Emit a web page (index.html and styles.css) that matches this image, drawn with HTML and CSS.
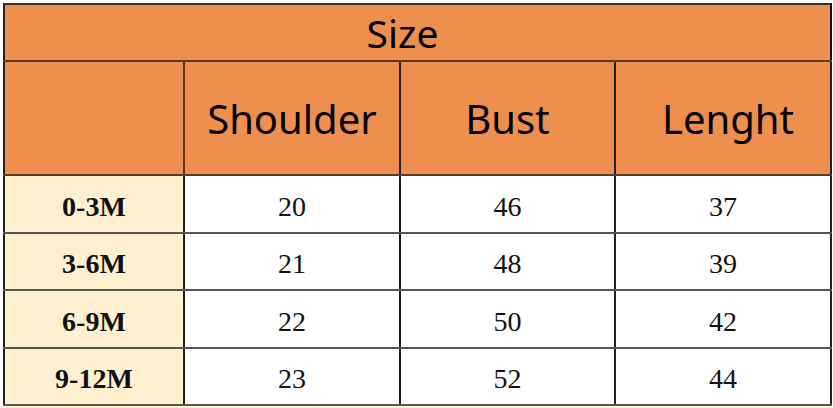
FILE: index.html
```html
<!DOCTYPE html>
<html>
<head>
<meta charset="utf-8">
<link rel="stylesheet" href="styles.css">
</head>
<body>
<div class="page">
  <table class="size-table">
    <colgroup>
      <col class="c1"><col class="c2"><col class="c3"><col class="c4">
    </colgroup>
    <tr class="title-row"><th colspan="4" class="title">Size</th></tr>
    <tr class="head-row">
      <th class="corner"></th>
      <th class="head">Shoulder</th>
      <th class="head">Bust</th>
      <th class="head head-last">Lenght</th>
    </tr>
    <tr class="data-row"><td class="label">0-3M</td><td class="val">20</td><td class="val">46</td><td class="val">37</td></tr>
    <tr class="data-row short"><td class="label">3-6M</td><td class="val">21</td><td class="val">48</td><td class="val">39</td></tr>
    <tr class="data-row"><td class="label">6-9M</td><td class="val">22</td><td class="val">50</td><td class="val">42</td></tr>
    <tr class="data-row short"><td class="label">9-12M</td><td class="val">23</td><td class="val">52</td><td class="val">44</td></tr>
  </table>
  <div class="bottom-strip"></div>
</div>
</body>
</html>
```

FILE: styles.css
```css
html, body {
  margin: 0;
  padding: 0;
  background: #ffffff;
}
.page {
  width: 833px;
  height: 408px;
  padding: 3px 0 0 3px;
  box-sizing: border-box;
  overflow: hidden;
}
.size-table {
  border-collapse: collapse;
  table-layout: fixed;
  width: 828px;
}
.c1 { width: 180px; }
.c2 { width: 216px; }
.c3 { width: 215px; }
.c4 { width: 216px; }
.size-table th,
.size-table td {
  padding: 0;
  text-align: center;
  vertical-align: middle;
}
.title-row th,
.head-row th {
  background: #ef8f4d;
  border: 2px solid #5a3a22;
  font-family: "Noto Sans", sans-serif;
  font-weight: normal;
  color: #000;
}
.title {
  height: 55px;
  font-size: 39px;
  padding-right: 30px !important;
  border-top-color: #333 !important;
  border-left-color: #222 !important;
  border-right-color: #111 !important;
}
.head {
  height: 112px;
  font-size: 40px;
  border-left-color: #222 !important;
  border-right-color: #222 !important;
}
.head-last {
  padding-left: 10px !important;
}
.corner {
  border-left-color: #222 !important;
}
.head-row th {
  border-top-color: #6a4527;
}
.data-row td {
  height: 51px;
  border: 2px solid #555;
  border-left-color: #222;
  border-right-color: #222;
  font-family: "Liberation Serif", "Times New Roman", serif;
  font-size: 28px;
  color: #111;
  padding-top: 5px;
  line-height: 1;
}
.data-row.short td {
  height: 50px;
}
.data-row td.label {
  background: #fff1cf;
  font-weight: bold;
}
.data-row td.val {
  background: #ffffff;
}
.bottom-strip {
  height: 4px;
  margin-left: -3px;
  width: 833px;
  background: #fff3d6;
}
```
